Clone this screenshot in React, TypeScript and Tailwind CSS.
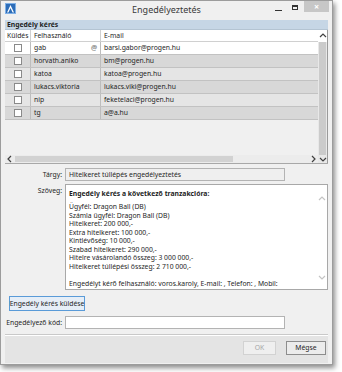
import type { ReactNode } from 'react';

const rows = [
  { user: 'gab', email: 'barsi.gabor@progen.hu', bg: 'bg-white', at: true },
  { user: 'horvath.aniko', email: 'bm@progen.hu', bg: 'bg-[#d8d8d8]' },
  { user: 'katoa', email: 'katoa@progen.hu', bg: 'bg-[#e5e5e5]' },
  { user: 'lukacs.viktoria', email: 'lukacs.viki@progen.hu', bg: 'bg-[#d8d8d8]' },
  { user: 'nip', email: 'feketelaci@progen.hu', bg: 'bg-[#e5e5e5]' },
  { user: 'tg', email: 'a@a.hu', bg: 'bg-[#d8d8d8]' },
];

const lines = [
  'Ügyfél: Dragon Ball (DB)',
  'Számla ügyfél: Dragon Ball (DB)',
  'Hitelkeret: 200 000,-',
  'Extra hitelkeret: 100 000,-',
  'Kintlévőség: 10 000,-',
  'Szabad hitelkeret: 290 000,-',
  'Hitelre vásárolandó összeg: 3 000 000,-',
  'Hitelkeret túllépési összeg: 2 710 000,-',
];

function Chevron({ dir, color = '#404040' }: { dir: 'up' | 'down' | 'left' | 'right'; color?: string }) {
  const d = {
    up: 'M1 5 L4 2 L7 5',
    down: 'M1 3 L4 6 L7 3',
    left: 'M5 1 L2 4 L5 7',
    right: 'M3 1 L6 4 L3 7',
  }[dir];
  return (
    <svg width="8" height="8" viewBox="0 0 8 8">
      <path d={d} fill="none" stroke={color} strokeWidth="1.2" />
    </svg>
  );
}

function Label({ children, top }: { children: ReactNode; top?: boolean }) {
  return (
    <div className={`w-[58px] shrink-0 text-right pr-[1px] whitespace-nowrap ${top ? 'pt-[3px]' : 'self-center'}`}>
      {children}
    </div>
  );
}

export default function App() {
  return (
    <div className="w-[342px] h-[372px] bg-white font-['Noto_Sans',sans-serif] text-[6.8px] leading-[8px] text-[#1e1e1e]">
      <div className="w-[333px] h-[365px] flex flex-col bg-[#f0f0f0] border border-[#9c9c9c] shadow-[2px_3px_5px_rgba(0,0,0,0.45)]">
        {/* Title bar */}
        <div className="h-[19px] shrink-0 grid grid-cols-[1fr_auto_1fr] items-start">
          <div className="pl-[4px] pt-[2px]">
            <svg width="11" height="11" viewBox="0 0 11 11">
              <rect x="0" y="0" width="11" height="11" fill="#2d6db8" />
              <rect x="0.5" y="0.5" width="10" height="10" fill="none" stroke="#7fb0e6" />
              <path d="M2 9.5 L5.5 2 L9 9.5 L7.6 9.5 L5.5 5 L3.4 9.5 Z" fill="#fff" />
            </svg>
          </div>
          <div className="pt-[4px] text-[9px] leading-[10px] text-[#3a3a3a]">Engedélyeztetés</div>
          <div className="flex justify-end items-start pr-[3px]">
            <div className="w-[7px] h-[1px] bg-[#333] mt-[9px] mr-[10px]" />
            <div className="w-[6px] h-[5px] border border-[#333] border-t-2 mt-[4px] mr-[6px]" />
            <div className="w-[25px] h-[11px] bg-[#c7c7c7] flex items-center justify-center text-white text-[9px] leading-[9px] font-bold">
              ×
            </div>
          </div>
        </div>

        <div className="flex-1 flex flex-col px-[4px]">
          {/* Engedély kérés table */}
          <div className="h-[144px] shrink-0 flex flex-col border-b border-[#a8a8a8]">
            <div className="h-[10px] bg-[#c6d6e5] font-bold pl-[2px] leading-[10px] border-b border-[#b4c4d2]">
              Engedély kérés
            </div>
            <div className="flex-1 flex border-r border-[#9a9a9a]">
              <div className="flex-1 flex flex-col">
                <div className="h-[12px] flex bg-white border-b border-[#d0d0d0]">
                  <div className="w-[26px] border-r border-[#d0d0d0] pl-[2px] leading-[11px]">Küldés</div>
                  <div className="w-[70px] border-r border-[#d0d0d0] pl-[3px] leading-[11px]">Felhasználó</div>
                  <div className="flex-1 pl-[3px] leading-[11px]">E-mail</div>
                </div>
                {rows.map((r) => (
                  <div key={r.user} className={`h-[13px] flex border-b border-[#c2c2c2] ${r.bg}`}>
                    <div className="w-[26px] border-r border-[#bdbdbd] flex items-center justify-center">
                      <div className="w-[8px] h-[8px] bg-white border border-[#8a8a8a]" />
                    </div>
                    <div className="w-[70px] border-r border-[#bdbdbd] pl-[3px] flex items-center justify-between pr-[3px]">
                      <span>{r.user}</span>
                      {r.at && <span className="text-[#8a8a8a] font-bold">@</span>}
                    </div>
                    <div className="flex-1 pl-[3px] flex items-center">{r.email}</div>
                  </div>
                ))}
                <div className="flex-1 bg-[#f0f0f0]" />
                <div className="h-[8px] flex items-center bg-[#ececec]">
                  <div className="w-[10px] flex justify-center">
                    <Chevron dir="left" />
                  </div>
                  <div className="w-[218px] h-[6px] bg-[#d2d2d2]" />
                  <div className="flex-1" />
                  <div className="w-[10px] flex justify-center">
                    <Chevron dir="right" />
                  </div>
                </div>
              </div>
              <div className="w-[9px] flex flex-col bg-[#e8e8e8]">
                <div className="h-[12px] bg-white flex items-center justify-center">
                  <Chevron dir="up" />
                </div>
                <div className="flex-1 mx-[1px] bg-[#cbcbcb]" />
                <div className="h-[8px] flex items-center justify-center">
                  <Chevron dir="down" />
                </div>
              </div>
            </div>
          </div>

          {/* Tárgy */}
          <div className="mt-[4px] h-[13px] flex">
            <Label>Tárgy:</Label>
            <div className="ml-[2px] w-[220px] border border-[#b3b3b3] bg-[#efefef] pl-[3px] leading-[11px]">
              Hitelkeret túllépés engedélyeztetés
            </div>
          </div>

          {/* Szöveg */}
          <div className="mt-[3px] h-[106px] flex">
            <Label top>Szöveg:</Label>
            <div className="ml-[2px] flex-1 flex border border-[#a8a8a8] bg-white">
              <div className="flex-1 pl-[3px] pt-[5px] leading-[8.5px]">
                <div className="font-bold mb-[4.5px]">Engedély kérés a következő tranzakcióra:</div>
                {lines.map((l) => (
                  <div key={l}>{l}</div>
                ))}
                <div className="h-[8.5px]" />
                <div className="whitespace-nowrap">Engedélyt kérő felhasználó: voros.karoly, E-mail: , Telefon: , Mobil:</div>
              </div>
              <div className="w-[10px] flex flex-col items-center justify-between pt-[10px] pb-[8px]">
                <Chevron dir="up" color="#c4c4c4" />
                <Chevron dir="down" color="#c4c4c4" />
              </div>
            </div>
          </div>

          {/* Send button */}
          <div className="mt-[6px] h-[15px] flex pl-[4px]">
            <div className="w-[76px] border border-[#5a9bd8] bg-[#e6eef7] flex items-center justify-center whitespace-nowrap">
              Engedély kérés küldése
            </div>
          </div>

          {/* Kód */}
          <div className="mt-[5px] h-[13px] flex">
            <Label>Engedélyező kód:</Label>
            <div className="ml-[2px] w-[220px] border border-[#b3b3b3] bg-white" />
          </div>

          {/* Footer */}
          <div className="mt-[5px] h-[2px] border-t border-[#c9c9c9] border-b border-b-white" />
          <div className="flex-1 bg-[#e4e4e4] flex justify-end items-start gap-[10px] pt-[5px] pr-[2px] mb-[1px]">
            <div className="w-[33px] h-[14px] border border-[#d2d2d2] bg-[#efefef] text-[#a5a5a5] flex items-center justify-center">
              OK
            </div>
            <div className="w-[40px] h-[14px] border border-[#8d8d8d] bg-[#ececec] flex items-center justify-center">
              Mégse
            </div>
          </div>
        </div>
      </div>
    </div>
  );
}
